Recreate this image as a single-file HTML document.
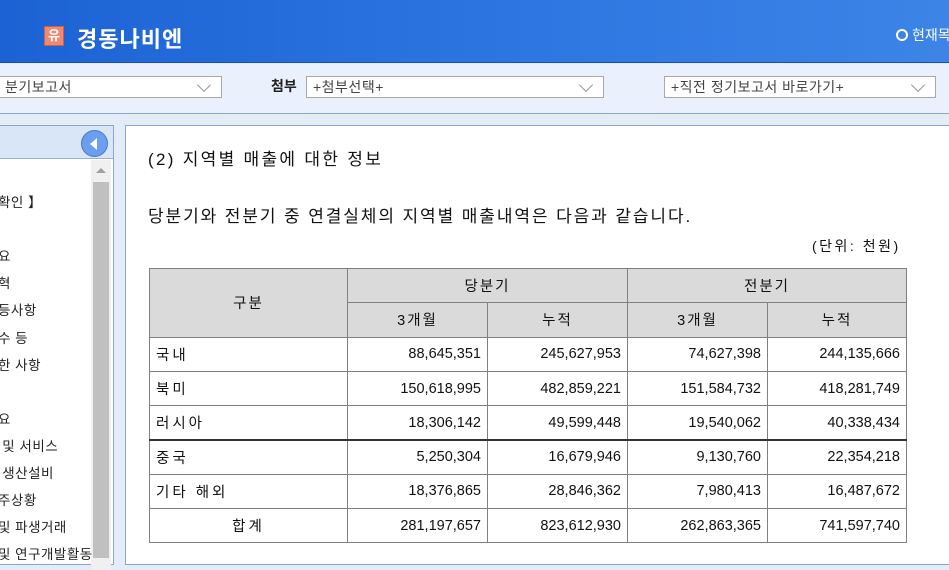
<!DOCTYPE html>
<html><head><meta charset="utf-8"><style>
*{margin:0;padding:0;box-sizing:border-box}
body{width:949px;height:562px;overflow:hidden;background:#e4ecf8;font-family:"Liberation Sans","Noto Sans CJK KR","NanumGothic",sans-serif;position:relative}
.hdr{position:absolute;left:0;top:0;width:949px;height:63px;background:linear-gradient(90deg,#1c62d4,#2f78e2 60%,#3d84e6);border-bottom:1px solid #1a4fa8}
.logo{position:absolute;left:44px;top:26px;width:20px;height:20px;background:#ef8a72;border:1px solid #c8644e;color:#fff;font-size:13px;font-weight:bold;text-align:center;line-height:18px}
.title{position:absolute;left:77px;top:22px;color:#fff;font-size:22px;font-weight:bold;letter-spacing:1px}
.cur{position:absolute;left:896px;top:25px;color:#fff;font-size:14px;white-space:nowrap}
.cur i{display:inline-block;width:12px;height:12px;border:2px solid #fff;border-radius:50%;margin-right:4px;vertical-align:-1px}
.tb{position:absolute;left:0;top:64px;width:949px;height:50px;background:#eaf1fc;border-bottom:1px solid #8fa6cc}
.sel{position:absolute;top:12px;height:22px;background:#fff;border:1px solid #a8a8a8;font-size:14px;color:#444;line-height:20px;padding-left:6px;letter-spacing:.5px}
.sel:after{content:"";position:absolute;right:12px;top:3px;width:9px;height:9px;border-right:1.5px solid #999;border-bottom:1.5px solid #999;transform:rotate(45deg)}
.lab{position:absolute;left:271px;top:76px;font-size:14px;font-weight:bold;color:#222}
.lp{position:absolute;left:-2px;top:125px;width:116px;height:440px;background:#fff;border:1px solid #8fa6cc}
.lph{position:absolute;left:0;top:0;width:114px;height:33px;background:#d8e6f8;border-bottom:1px solid #9ab0d4}
.btn{position:absolute;left:82px;top:4px;width:27px;height:27px;border-radius:50%;background:#6c9ef0;border:1px solid #4a78c8}
.btn:after{content:"";position:absolute;left:8px;top:7px;border-right:7px solid #fff;border-top:6px solid transparent;border-bottom:6px solid transparent}
.sb{position:absolute;left:92px;top:34px;width:20px;height:410px;background:#f0f0f0}
.th{position:absolute;left:2px;top:22px;width:16px;height:376px;background:#c0c0c0}
.ar{position:absolute;left:5px;top:8px;border-bottom:5px solid #a0a0a0;border-left:5px solid transparent;border-right:5px solid transparent}
.mi{position:absolute;left:-2px;font-size:13.5px;color:#222;white-space:nowrap;letter-spacing:.5px}
.ct{position:absolute;left:125px;top:125px;width:830px;height:440px;background:#fff;border:1px solid #8fa6cc}
.t1{position:absolute;left:148px;top:145px;font-size:17px;color:#111;letter-spacing:2.3px}
.t2{position:absolute;left:148px;top:202px;font-size:17px;color:#111;letter-spacing:1.9px}
.t3{position:absolute;left:812px;top:236px;font-size:14px;color:#111;letter-spacing:2.5px}
table{position:absolute;left:149px;top:268px;border-collapse:collapse;border:1.5px solid #000;font-size:14.5px;color:#111}
td{border:1px solid #808080;height:34.3px;padding:0 6px}
.h{background:#dadada;text-align:center;letter-spacing:2px}
.k{letter-spacing:3px}
.n{text-align:right}
.c{text-align:center;letter-spacing:3px}
tr.tk td{border-top:2px solid #333}
</style></head><body>
<div class="hdr"><div class="logo">유</div><div class="title">경동나비엔</div><div class="cur"><i></i>현재목</div></div>
<div class="tb"></div>
<div class="sel" style="left:-2px;top:76px;width:224px">분기보고서</div>
<div class="lab">첨부</div>
<div class="sel" style="left:306px;top:76px;width:298px">+첨부선택+</div>
<div class="sel" style="left:664px;top:76px;width:272px">+직전 정기보고서 바로가기+</div>
<div class="lp"><div class="lph"><div class="btn"></div></div>
<div class="sb"><div class="ar"></div><div class="th"></div></div></div>
<div class="mi" style="top:191px">확인 】</div>
<div class="mi" style="top:245px">요</div>
<div class="mi" style="top:272px">혁</div>
<div class="mi" style="top:299px">등사항</div>
<div class="mi" style="top:327px">수 등</div>
<div class="mi" style="top:354px">한 사항</div>
<div class="mi" style="top:408px">요</div>
<div class="mi" style="top:435px">&nbsp;및 서비스</div>
<div class="mi" style="top:462px">&nbsp;생산설비</div>
<div class="mi" style="top:489px">주상황</div>
<div class="mi" style="top:516px">및 파생거래</div>
<div class="mi" style="top:543px">및 연구개발활동</div>
<div class="ct"></div>
<div class="t1">(2) 지역별 매출에 대한 정보</div>
<div class="t2">당분기와 전분기 중 연결실체의 지역별 매출내역은 다음과 같습니다.</div>
<div class="t3">(단위: 천원)</div>
<table>
<colgroup><col style="width:198px"><col style="width:140px"><col style="width:140px"><col style="width:140px"><col style="width:139px"></colgroup>
<tr><td class="h" rowspan="2">구분</td><td class="h" colspan="2">당분기</td><td class="h" colspan="2">전분기</td></tr>
<tr><td class="h">3개월</td><td class="h">누적</td><td class="h">3개월</td><td class="h">누적</td></tr>
<tr><td class="k">국내</td><td class="n">88,645,351</td><td class="n">245,627,953</td><td class="n">74,627,398</td><td class="n">244,135,666</td></tr>
<tr><td class="k">북미</td><td class="n">150,618,995</td><td class="n">482,859,221</td><td class="n">151,584,732</td><td class="n">418,281,749</td></tr>
<tr><td class="k">러시아</td><td class="n">18,306,142</td><td class="n">49,599,448</td><td class="n">19,540,062</td><td class="n">40,338,434</td></tr>
<tr class="tk"><td class="k">중국</td><td class="n">5,250,304</td><td class="n">16,679,946</td><td class="n">9,130,760</td><td class="n">22,354,218</td></tr>
<tr><td class="k">기타 해외</td><td class="n">18,376,865</td><td class="n">28,846,362</td><td class="n">7,980,413</td><td class="n">16,487,672</td></tr>
<tr><td class="c">합계</td><td class="n">281,197,657</td><td class="n">823,612,930</td><td class="n">262,863,365</td><td class="n">741,597,740</td></tr>
</table>
</body></html>
